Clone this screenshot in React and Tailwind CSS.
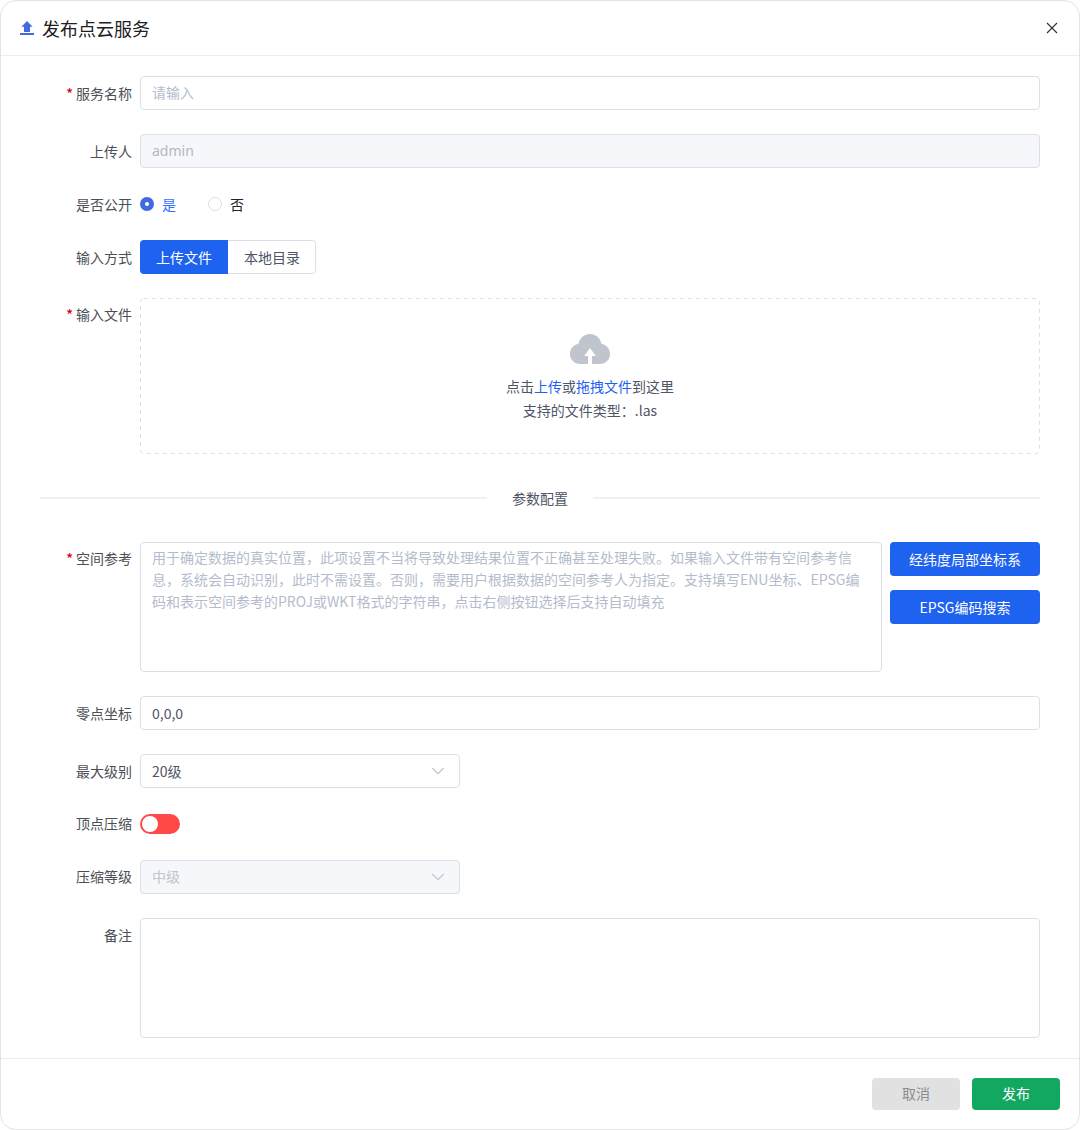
import React from 'react';

function Row({ label, required, height, mb, pad, children }) {
  return (
    <div className={`flex items-start ${height} ${mb}`}>
      <div className={`flex w-[92px] shrink-0 justify-end leading-[20px] text-[#4c4f55] ${pad}`}>
        {required && <span className="mr-[3px] font-medium text-[#d9001b]">*</span>}
        <span>{label}</span>
      </div>
      <div className="ml-2 flex min-w-0 flex-1">{children}</div>
    </div>
  );
}

const field = 'flex h-[34px] items-center rounded border border-[#dcdfe6] px-[11px]';

function Chevron() {
  return (
    <svg className="mr-[3px] h-[14px] w-[14px]" viewBox="0 0 14 14" fill="none" stroke="#c0c4cc" strokeWidth="1.2">
      <path d="M1.2 4 7 9.6l5.8-5.6" />
    </svg>
  );
}

export default function App() {
  return (
    <div className="flex h-[1130px] w-[1080px] flex-col rounded-[16px] border border-[#e4e4e4] bg-white font-['Noto_Sans_CJK_SC',sans-serif] text-[14px]">
      <header className="flex h-[55px] shrink-0 items-center border-b border-[#ececec] pr-[21px] pl-[19px]">
        <svg className="h-[14px] w-[14px]" viewBox="0 0 14 14" fill="#4169e1">
          <path d="M7 0 12.6 5.8H10V11H4V5.8H1.4Z M0 12H14V14H0Z" />
        </svg>
        <h1 className="ml-[8px] text-[18px] leading-[26px] font-normal text-[#1f2024]">发布点云服务</h1>
        <svg className="ml-auto h-[12px] w-[12px]" viewBox="0 0 12 12" stroke="#2b2f3a" strokeWidth="1.1">
          <path d="M1 1 11 11M11 1 1 11" />
        </svg>
      </header>

      <main className="flex-1 px-[39px] pt-[20px]">
        <Row label="服务名称" required height="h-[34px]" mb="mb-6" pad="pt-[7px]">
          <div className={`${field} w-full pb-[2px] text-[#b4bccc]`}>请输入</div>
        </Row>
        <Row label="上传人" height="h-[34px]" mb="mb-6" pad="pt-[7px]">
          <div className={`${field} w-full bg-[#f5f7fa] pb-[2px] text-[#b4b8c2]`}>
            <span className="font-['Noto_Sans',sans-serif]">admin</span>
          </div>
        </Row>
        <Row label="是否公开" height="h-[24px]" mb="mb-6" pad="pt-[2px]">
          <div className="flex h-6 items-center leading-[20px]">
            <span className="flex h-[14px] w-[14px] items-center justify-center rounded-full bg-[#4169e1]">
              <span className="h-1 w-1 rounded-full bg-white" />
            </span>
            <span className="ml-2 text-[#3370ff]">是</span>
            <span className="ml-8 h-[14px] w-[14px] rounded-full border border-[#dcdfe6]" />
            <span className="ml-2 text-[#1d2129]">否</span>
          </div>
        </Row>
        <Row label="输入方式" height="h-[34px]" mb="mb-6" pad="pt-[7px]">
          <button className="h-[34px] w-[88px] rounded-l bg-[#1e62f0] text-white">上传文件</button>
          <button className="h-[34px] w-[88px] rounded-r border border-l-0 border-[#dcdfe6] pl-px text-[#4e5566]">本地目录</button>
        </Row>
        <Row label="输入文件" required height="h-[156px]" mb="mb-[32px]" pad="pt-[6px]">
          <div className="relative flex h-[156px] w-full flex-col items-center pt-[36px] text-[#4e5566]">
            <svg className="absolute inset-0 h-full w-full" fill="none">
              <rect x="0.5" y="0.5" width="899" height="155" rx="3.5" stroke="#dcdfe6" strokeDasharray="4 4" />
            </svg>
            <svg className="h-[30px] w-10" viewBox="0 0 40 30" fill="#c0c4cc">
              <path d="M8.5 10.1C9.5 4.2 14.2 0 20 0S30.5 4.2 31.5 10.1C36.4 10.6 40 14.8 40 20 40 25.6 35.6 30 30 30H22V22H25.8L20 14 14.2 22H18V30H10C4.4 30 0 25.6 0 20 0 14.8 3.6 10.6 8.5 10.1Z" />
            </svg>
            <p className="mt-[10px] leading-6">
              点击<span className="text-[#1e62f0]">上传</span>或<span className="text-[#1e62f0]">拖拽文件</span>到这里
            </p>
            <p className="leading-6">支持的文件类型：.las</p>
          </div>
        </Row>

        <div className="mb-[32px] flex h-6 items-center">
          <div className="mb-px h-[2px] flex-1 bg-[#f0f0f0]" />
          <span className="mx-[25px] text-[#4e5566]">参数配置</span>
          <div className="mb-px h-[2px] flex-1 bg-[#f0f0f0]" />
        </div>

        <Row label="空间参考" required height="h-[130px]" mb="mb-6" pad="pt-[6px]">
          <div className="h-[130px] w-[742px] rounded border border-[#dcdfe6] px-[11px] pt-[3px] leading-[22px] text-[#b4bccc]">
            <div className="whitespace-nowrap">用于确定数据的真实位置，此项设置不当将导致处理结果位置不正确甚至处理失败。如果输入文件带有空间参考信</div>
            <div className="whitespace-nowrap">息，系统会自动识别，此时不需设置。否则，需要用户根据数据的空间参考人为指定。支持填写ENU坐标、EPSG编</div>
            <div className="whitespace-nowrap">码和表示空间参考的PROJ或WKT格式的字符串，点击右侧按钮选择后支持自动填充</div>
          </div>
          <div className="ml-2 flex w-[150px] flex-col gap-[14px]">
            <button className="h-[34px] rounded bg-[#1e62f0] text-white">经纬度局部坐标系</button>
            <button className="h-[34px] rounded bg-[#1e62f0] text-white">EPSG编码搜索</button>
          </div>
        </Row>
        <Row label="零点坐标" height="h-[34px]" mb="mb-6" pad="pt-[7px]">
          <div className={`${field} w-full text-[#4e5566]`}>0,0,0</div>
        </Row>
        <Row label="最大级别" height="h-[34px]" mb="mb-6" pad="pt-[7px]">
          <div className={`${field} w-[320px] justify-between text-[#4e5566]`}>20级<Chevron /></div>
        </Row>
        <Row label="顶点压缩" height="h-[24px]" mb="mb-6" pad="pt-[1px]">
          <div className="mt-[2px] flex h-5 w-10 items-center rounded-full bg-[#ff4949] px-[2px]">
            <span className="h-4 w-4 rounded-full bg-white" />
          </div>
        </Row>
        <Row label="压缩等级" height="h-[34px]" mb="mb-6" pad="pt-[6px]">
          <div className={`${field} w-[320px] justify-between bg-[#f5f7fa] text-[#c0c4cc]`}><span className="pb-[2px]">中级</span><Chevron /></div>
        </Row>
        <Row label="备注" height="h-[120px]" mb="mb-0" pad="pt-[7px]">
          <div className="h-[120px] w-full rounded border border-[#dcdfe6]" />
        </Row>
      </main>

      <footer className="flex h-[71px] shrink-0 items-center justify-end gap-3 border-t border-[#ececec] pr-[19px]">
        <button className="h-8 w-[88px] rounded bg-[#e1e1e1] pb-[2px] text-[#8c8c8c]">取消</button>
        <button className="h-8 w-[88px] rounded bg-[#13a862] pb-[2px] text-white">发布</button>
      </footer>
    </div>
  );
}
